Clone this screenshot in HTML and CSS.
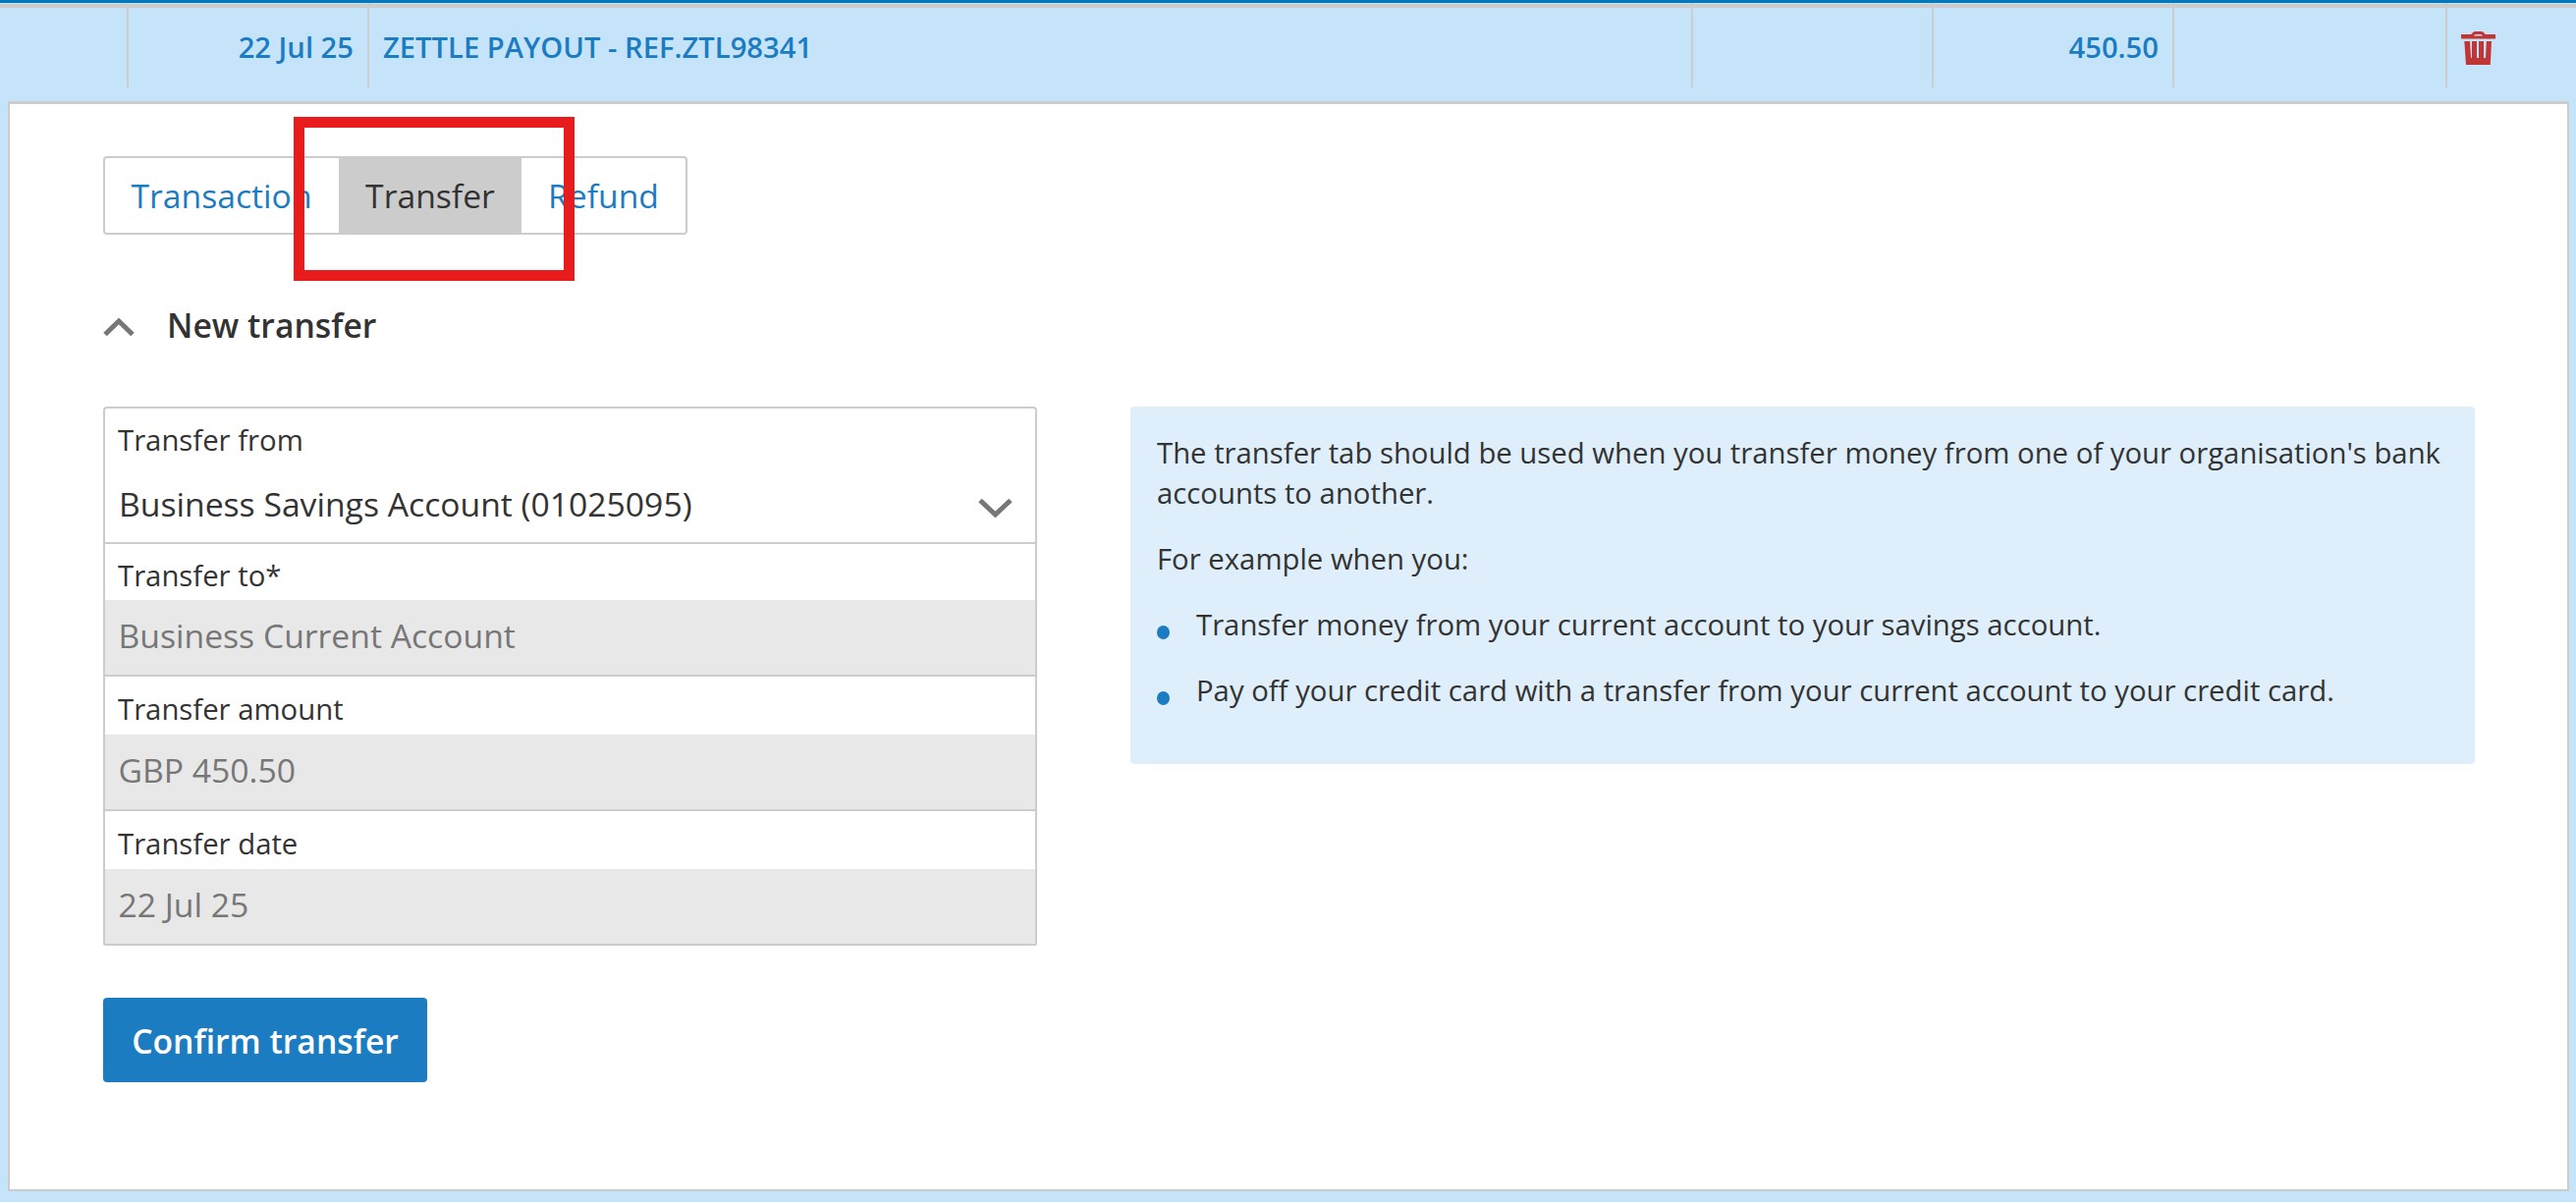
FILE: index.html
```html
<!DOCTYPE html>
<html lang="en">
<head>
<meta charset="utf-8">
<title>New transfer</title>
<link rel="stylesheet" href="styles.css">
</head>
<body>
<div class="topbar"></div>
<div class="row">
  <div class="cell"></div>
  <div class="cell cell-right">22 Jul 25</div>
  <div class="cell">ZETTLE PAYOUT - REF.ZTL98341</div>
  <div class="cell"></div>
  <div class="cell cell-right">450.50</div>
  <div class="cell"></div>
  <div class="cell cell-last">
    <svg class="trash" viewBox="0 0 35 34" aria-hidden="true"><path d="M0 3H10.500C11.500 1 13 0 14.500 0H20.500C22 0 23.500 1 24.500 3H35V7.500H0ZM13 4.500H22C21.500 3.500 20.500 3 19.500 3H15.500C14.500 3 13.500 3.500 13 4.500Z" fill-rule="evenodd"/><path d="M3.300 10H9L10 27H25L25.800 10H31L29.800 34H5Z"/><rect x="11" y="10" width="5" height="17"/><rect x="18" y="10" width="5" height="17"/></svg>
  </div>
</div>
<main class="panel">
  <div class="tabs">
    <a class="tab tab-first">Transaction</a>
    <a class="tab tab-active">Transfer</a>
    <a class="tab tab-last">Refund</a>
  </div>
  <div class="section-head">
    <svg class="chev-up" viewBox="0 0 32 18" aria-hidden="true"><path d="M2 16.500L16 3L30 16.500" /></svg>
    <h2 class="section-title">New transfer</h2>
  </div>
  <div class="columns">
    <div class="left">
      <div class="form">
        <div class="field field-select">
          <div class="field-label">Transfer from</div>
          <div class="select-value"><span>Business Savings Account (01025095)</span>
            <svg class="chev-down" viewBox="0 0 35 20" aria-hidden="true"><path d="M2 2.500L17.500 17L33 2.500"/></svg>
          </div>
        </div>
        <div class="field field-second">
          <div class="field-label">Transfer to*</div>
          <div class="field-value">Business Current Account</div>
        </div>
        <div class="field">
          <div class="field-label">Transfer amount</div>
          <div class="field-value">GBP 450.50</div>
        </div>
        <div class="field">
          <div class="field-label">Transfer date</div>
          <div class="field-value">22 Jul 25</div>
        </div>
      </div>
      <button class="confirm" type="button">Confirm transfer</button>
    </div>
    <aside class="info">
      <p class="info-text">The transfer tab should be used when you transfer money from one of your organisation's bank accounts to another.</p>
      <p class="info-text">For example when you:</p>
      <ul class="info-list">
        <li>Transfer money from your current account to your savings account.</li>
        <li>Pay off your credit card with a transfer from your current account to your credit card.</li>
      </ul>
    </aside>
  </div>
</main>
<div class="highlight"></div>
</body>
</html>
```
FILE: styles.css
```css
* { box-sizing: border-box; }
html, body { margin: 0; padding: 0; }
body {
  position: relative;
  width: 2623px;
  height: 1224px;
  overflow: hidden;
  background: #c5e4fa;
  font-family: "Open Sans", "Noto Sans", sans-serif;
  color: #333;
}
.topbar { height: 3px; background: #0079c1; }
.row {
  display: grid;
  grid-template-columns: 131px 245px 1348px 245px 245px 278px 1fr;
  height: 86px;
  background: linear-gradient(#c5e4fa 1px, #ccc 1px, #ccc 5px, #c5e4fa 5px);
  color: #1c7cc2;
  font-size: 29.200px;
  font-weight: 600;
}
.cell {
  display: flex;
  align-items: center;
  padding: 4px 14px 0 14px;
  border-right: 2px solid #ccc;
  white-space: nowrap;
}
.cell-right { justify-content: flex-end; }
.cell-last { border-right: 0; padding: 0 0 0 14px; }
.trash { width: 35px; height: 34px; fill: #c23535; margin-top: 6px; }

.panel {
  margin: 14px 7px 0 8px;
  height: 1110px;
  border: 2px solid #ccc;
  border-top-width: 3px;
  background: #fff;
  padding: 53px 93px 0 95px;
}
.tabs {
  display: inline-flex;
  height: 80px;
  border: 2px solid #ccc;
  border-radius: 4px;
  font-size: 33.700px;
}
.tab {
  display: flex;
  align-items: center;
  color: #1c7cc2;
}
.tab-first { width: 238px; padding-left: 26.500px; }
.tab-active {
  width: 186px;
  margin: -2px 0;
  justify-content: center;
  background: #ccc;
  color: #333;
}
.tab-last { width: 167px; padding-left: 27px; }

.section-head {
  display: flex;
  align-items: center;
  height: 48px;
  margin-top: 68px;
}
.chev-up { width: 32px; height: 18px; margin-top: 4px; fill: none; stroke: #777; stroke-width: 5px; }
.section-title {
  margin: 0 0 0 33px;
  font-size: 33.700px;
  font-weight: 600;
  color: #333;
}

.columns {
  display: flex;
  gap: 95px;
  margin-top: 59px;
}
.left { width: 951px; flex: none; }
.form {
  border: 2px solid #ccc;
  border-radius: 4px 4px 2px 2px;
}
.field { border-bottom: 2px solid #ccc; }
.field:last-child { border-bottom: 0; }
.field-label {
  height: 59px;
  padding: 6px 13px 0;
  display: flex;
  align-items: center;
  font-size: 29.300px;
  color: #333;
}
.field-second .field-label { height: 57px; }
.field-value {
  height: 76px;
  padding: 0 13.500px 5px;
  display: flex;
  align-items: center;
  background: #e8e8e8;
  font-size: 33.700px;
  color: #777;
}
.field-select .field-label { height: 64px; padding-top: 0; }
.select-value {
  height: 72px;
  padding: 0 23px 6px 14px;
  display: flex;
  align-items: center;
  justify-content: space-between;
  font-size: 33.700px;
  color: #333;
}
.chev-down { width: 35px; height: 20px; margin-top: 8px; fill: none; stroke: #777; stroke-width: 5px; }
.confirm {
  display: block;
  width: 330px;
  height: 86px;
  margin-top: 53px;
  padding: 2px 0 0;
  border: 0;
  border-radius: 4px;
  background: #1c7cc2;
  color: #fff;
  font-family: inherit;
  font-size: 33.700px;
  font-weight: 600;
}
.info {
  width: 1369px;
  height: 364px;
  flex: none;
  padding: 27px 27px;
  border-radius: 4px;
  background: #deeefa;
  font-size: 29.300px;
  line-height: 41px;
}
.info-text { margin: 0 0 26px; }
.info-list { margin: 0; padding: 0; list-style: none; }
.info-list li {
  position: relative;
  padding-left: 40px;
  margin-bottom: 26px;
}
.info-list li::before {
  content: "";
  position: absolute;
  left: 0;
  top: 21px;
  width: 13px;
  height: 14px;
  border-radius: 50%;
  background: #1c7cc2;
}
.highlight {
  position: absolute;
  left: 298.500px;
  top: 119px;
  width: 286px;
  height: 167px;
  border: 11.500px solid #e81c1c;
}
```
